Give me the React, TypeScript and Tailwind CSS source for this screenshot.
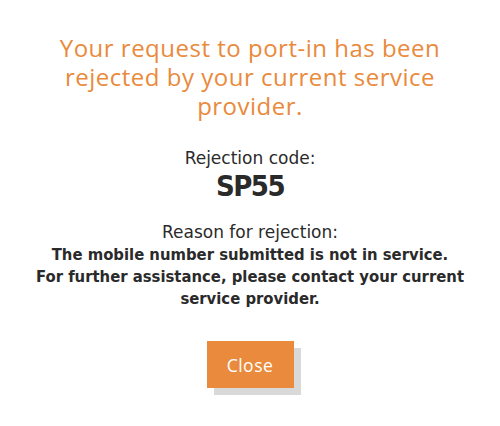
export default function App() {
  return (
    <div className="flex h-[426px] w-[500px] flex-col items-center bg-white text-center">
      <h1 className="mt-[33px] w-[420px] text-[24px] leading-[29px] tracking-[0.5px] text-[#e98a3c] [font-family:'Open_Sans',sans-serif]">
        Your request to port-in has been rejected by your current service provider.
      </h1>

      <div className="mt-[28px] flex flex-col items-center text-[#2a2a2a] [font-family:'DejaVu_Sans',sans-serif]">
        <p className="text-[17px] leading-[20px]">Rejection code:</p>
        <p className="mt-[2px] text-[29px] font-bold leading-[32px] tracking-[-1.5px] [font-family:'DejaVu_Sans_Condensed','DejaVu_Sans',sans-serif] [font-stretch:condensed]">
          SP55
        </p>
      </div>

      <div className="mt-[20px] flex flex-col items-center text-[#2a2a2a]">
        <p className="text-[17px] leading-[21px] [font-family:'DejaVu_Sans',sans-serif]">
          Reason for rejection:
        </p>
        <div className="mt-[1px] text-[16.5px] font-bold leading-[22px] [font-family:'DejaVu_Sans_Condensed','DejaVu_Sans',sans-serif] [font-stretch:condensed]">
          <p>The mobile number submitted is not in service.</p>
          <p className="w-[470px]">
            For further assistance, please contact your current service provider.
          </p>
        </div>
      </div>

      <div className="relative mt-[31px]">
        <div className="absolute left-[7px] top-[7px] h-[47px] w-[87px] bg-[#d9d9d9]" />
        <button className="relative h-[47px] w-[87px] bg-[#e98a3c] pt-[2px] text-[17.5px] font-medium tracking-[0.5px] text-white [font-family:'Open_Sans',sans-serif]">
          Close
        </button>
      </div>
    </div>
  );
}
